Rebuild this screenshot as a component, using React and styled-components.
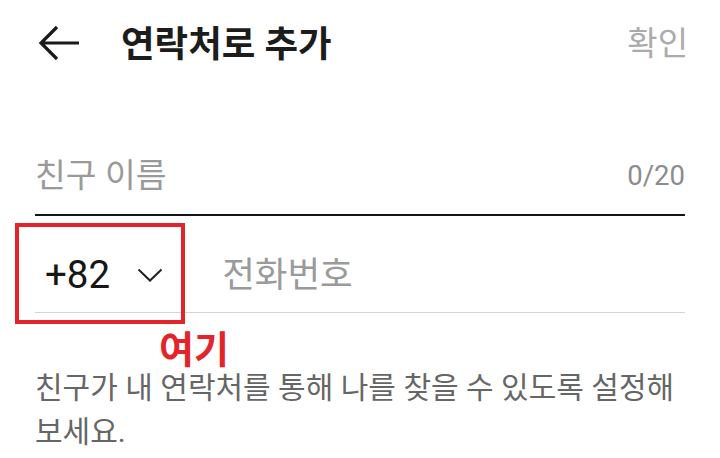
import React from "react";
import styled, { createGlobalStyle } from "styled-components";

const Global = createGlobalStyle`
  html, body { margin: 0; padding: 0; background: #ffffff; }
  body { font-family: Roboto, "Noto Sans CJK KR", sans-serif; }
`;

const Page = styled.div`
  width: 720px;
  height: 458px;
  overflow: hidden;
  background: #fff;
  padding: 0 35px;
  box-sizing: border-box;
`;

const Header = styled.header`
  display: flex;
  align-items: center;
  height: 86px;
`;

const BackButton = styled.button`
  border: 0;
  background: none;
  padding: 0;
  margin-left: 3px;
  display: flex;
  align-items: center;
  color: #1a1a1a;
  cursor: pointer;
`;

const Title = styled.h1`
  margin: 0 0 0 41px;
  font-size: 36.5px;
  font-weight: 700;
  color: #1c1c1c;
  line-height: 1;
  flex: 1;
  position: relative;
  top: 2px;
`;

const Confirm = styled.button`
  border: 0;
  background: none;
  padding: 0;
  margin-right: -3px;
  font-family: inherit;
  font-size: 33px;
  color: #ababab;
  line-height: 1;
`;

const Field = styled.div`
  display: flex;
  align-items: center;
  margin-top: 70px;
  padding-bottom: 18px;
  border-bottom: 2px solid ${(p) => p.$line};
`;

const FieldText = styled.span`
  flex: 1;
  font-size: ${(p) => p.$size}px;
  line-height: 40px;
  color: ${(p) => p.$color};
`;

const Counter = styled.span`
  font-size: 27.5px;
  color: #8c8c8c;
  line-height: 40px;
`;

const PhoneWrap = styled.div`
  position: relative;
  margin-top: 39px;
`;

const PhoneRow = styled.div`
  display: flex;
  align-items: center;
  padding-bottom: 17px;
  border-bottom: 1px solid #d4d4d4;
`;

const Country = styled.div`
  display: flex;
  align-items: center;
  padding-left: 10px;
  gap: 27px;
  margin-right: 59px;
  font-size: 38.5px;
  line-height: 40px;
  color: #161616;
`;

const Highlight = styled.div`
  position: absolute;
  left: -20px;
  top: -32px;
  width: 170px;
  height: 101px;
  box-sizing: border-box;
  border: 4px solid #e3242b;
  pointer-events: none;
`;

const Note = styled.span`
  position: absolute;
  left: 124px;
  top: 76px;
  font-size: 38px;
  line-height: 1;
  font-weight: 700;
  color: #e3242b;
`;

const Help = styled.p`
  margin: 53px 0 0;
  font-size: 30px;
  line-height: 44px;
  color: #666666;
  word-break: keep-all;
`;

export default function App() {
  return (
    <>
      <Global />
      <Page>
        <Header>
          <BackButton aria-label="뒤로">
            <svg width="42" height="36" viewBox="0 0 42 36" fill="none">
              <path d="M41 18H3M19 2L3 18l16 16" stroke="#1a1a1a" strokeWidth="3.2" strokeLinecap="butt" strokeLinejoin="miter" />
            </svg>
          </BackButton>
          <Title>연락처로 추가</Title>
          <Confirm>확인</Confirm>
        </Header>

        <Field $line="#141414">
          <FieldText $size={33.5} $color="#9a9a9a">친구 이름</FieldText>
          <Counter>0/20</Counter>
        </Field>

        <PhoneWrap>
          <PhoneRow>
            <Country>
              <span>+82</span>
              <svg width="26" height="14" viewBox="0 0 26 14" fill="none">
                <path d="M1.5 1.5L13 12.5 24.5 1.5" stroke="#222" strokeWidth="2" />
              </svg>
            </Country>
            <FieldText $size={35.5} $color="#9a9a9a">전화번호</FieldText>
          </PhoneRow>
          <Highlight />
          <Note>여기</Note>
        </PhoneWrap>

        <Help>친구가 내 연락처를 통해 나를 찾을 수 있도록 설정해 보세요.</Help>
      </Page>
    </>
  );
}
